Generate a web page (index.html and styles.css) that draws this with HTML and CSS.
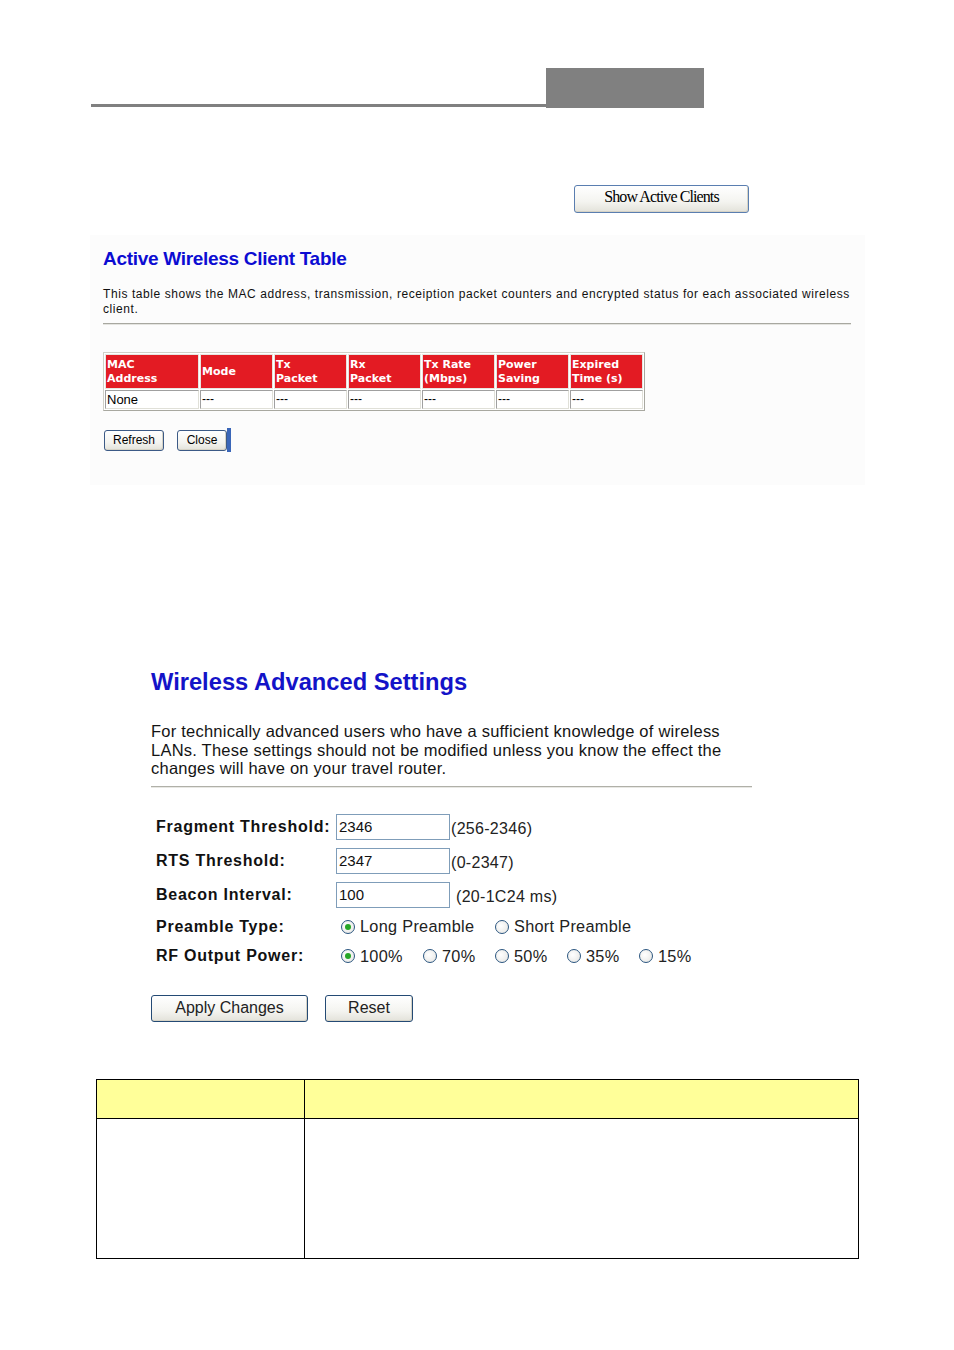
FILE: index.html
```html
<!DOCTYPE html>
<html>
<head>
<meta charset="utf-8">
<title>Wireless Settings</title>
<link rel="stylesheet" href="styles.css">
</head>
<body>
<div class="page">
  <header class="top">
    <div class="top-rule"></div>
    <div class="top-tab"></div>
  </header>

  <div class="show-row">
    <button class="xp-btn show-btn">Show Active Clients</button>
  </div>

  <section class="pane">
    <h2 class="pane-title">Active Wireless Client Table</h2>
    <p class="pane-desc">This table shows the MAC address, transmission, receiption packet counters and encrypted status for each associated wireless<br>client.</p>
    <div class="pane-hr"></div>
    <table class="clients">
      <tr class="clients-head">
        <th class="c-mac">MAC<br>Address</th>
        <th class="c-mode">Mode</th>
        <th>Tx<br>Packet</th>
        <th>Rx<br>Packet</th>
        <th>Tx Rate<br>(Mbps)</th>
        <th>Power<br>Saving</th>
        <th>Expired<br>Time (s)</th>
      </tr>
      <tr class="clients-row">
        <td class="none">None</td>
        <td>---</td>
        <td>---</td>
        <td>---</td>
        <td>---</td>
        <td>---</td>
        <td>---</td>
      </tr>
    </table>
    <div class="pane-btns">
      <button class="xp-btn small-btn refresh-btn">Refresh</button>
      <button class="xp-btn small-btn close-btn">Close</button>
      <span class="focus-bar"></span>
    </div>
  </section>

  <section class="adv">
    <h1 class="adv-title">Wireless Advanced Settings</h1>
    <p class="adv-desc">For technically advanced users who have a sufficient knowledge of wireless<br>LANs. These settings should not be modified unless you know the effect the<br>changes will have on your travel router.</p>
    <div class="adv-hr"></div>

    <div class="form">
      <div class="form-row r1">
        <span class="lbl">Fragment Threshold:</span>
        <span class="field">2346</span>
        <span class="range">(256-2346)</span>
      </div>
      <div class="form-row r2">
        <span class="lbl">RTS Threshold:</span>
        <span class="field">2347</span>
        <span class="range">(0-2347)</span>
      </div>
      <div class="form-row r3">
        <span class="lbl">Beacon Interval:</span>
        <span class="field">100</span>
        <span class="range spaced">(20-1C24 ms)</span>
      </div>
      <div class="form-row r4">
        <span class="lbl">Preamble Type:</span>
        <span class="opts">
          <span class="opt w-long"><span class="radio on"></span>Long Preamble</span>
          <span class="opt"><span class="radio"></span>Short Preamble</span>
        </span>
      </div>
      <div class="form-row r5">
        <span class="lbl">RF Output Power:</span>
        <span class="opts">
          <span class="opt w-p100"><span class="radio on"></span>100%</span>
          <span class="opt w-p"><span class="radio"></span>70%</span>
          <span class="opt w-p"><span class="radio"></span>50%</span>
          <span class="opt w-p"><span class="radio"></span>35%</span>
          <span class="opt"><span class="radio"></span>15%</span>
        </span>
      </div>
    </div>

    <div class="actions">
      <button class="xp-btn big-btn apply-btn">Apply Changes</button>
      <button class="xp-btn big-btn reset-btn">Reset</button>
    </div>
  </section>

  <table class="desc-table">
    <tr class="desc-head"><td class="d-left"></td><td class="d-right"></td></tr>
    <tr class="desc-body"><td class="d-left"></td><td class="d-right"></td></tr>
  </table>
</div>
</body>
</html>
```

FILE: styles.css
```css
html, body {
  margin: 0;
  padding: 0;
  background: #ffffff;
}

.page {
  width: 954px;
  height: 1350px;
  font-family: "Liberation Sans", Arial, sans-serif;
  color: #000;
}

/* top header */
.top {
  display: flex;
  padding-top: 68px;
  height: 40px;
}
.top-rule {
  margin-left: 91px;
  width: 455px;
  height: 3px;
  background: #808080;
  align-self: flex-end;
  margin-bottom: 1px;
}
.top-tab {
  width: 158px;
  height: 40px;
  background: #808080;
}

/* XP style buttons */
.xp-btn {
  box-sizing: border-box;
  border: 1px solid #3c5a86;
  border-radius: 3px;
  background: linear-gradient(#ffffff 0%, #f4f4f0 60%, #e3e2da 100%);
  color: #000;
  padding: 0;
  margin: 0;
  cursor: default;
  box-shadow: inset -1px -1px 0 #d6d3c6;
}

.show-row {
  margin-top: 77px;
  padding-left: 574px;
  height: 27px;
}
.show-btn {
  display: block;
  width: 175px;
  height: 28px;
  padding-bottom: 4px;
  font-family: "Liberation Serif", "Times New Roman", serif;
  font-size: 16px;
  letter-spacing: -0.9px;
  border-color: #5a7eb0;
}

/* screenshot pane */
.pane {
  margin-top: 23px;
  margin-left: 90px;
  width: 775px;
  height: 250px;
  box-sizing: border-box;
  padding: 13px 14px 0 13px;
  background: #fcfcfc;
}
.pane-title {
  margin: 0;
  font-size: 19px;
  line-height: 22px;
  letter-spacing: -0.3px;
  font-weight: bold;
  color: #0c0cd2;
}
.pane-desc {
  margin: 17px 0 0 0;
  font-size: 12px;
  line-height: 15px;
  letter-spacing: 0.58px;
  color: #111;
  white-space: nowrap;
}
.pane-hr {
  margin-top: 6px;
  height: 1px;
  background: #a8a8a0;
  border-bottom: 1px solid #e4e4e0;
}

.clients {
  margin-top: 27px;
  margin-left: 0;
  border-collapse: separate;
  border-spacing: 1px;
  border: 1px solid #d0d0c8;
  border-right-color: #a8a8a0;
  border-bottom-color: #a8a8a0;
  background: #fff;
}
.clients th {
  box-sizing: border-box;
  width: 73px;
  height: 35px;
  padding: 0 1px;
  background: #e31b23;
  color: #fff;
  text-align: left;
  vertical-align: middle;
  font-family: "DejaVu Sans", Verdana, sans-serif;
  font-size: 11px;
  line-height: 14px;
  font-weight: bold;
  border: 1px solid #e6e6e0;
}
.clients th.c-mac {
  width: 94px;
}
.clients td {
  box-sizing: border-box;
  height: 19px;
  padding: 0 1px;
  font-size: 12px;
  line-height: 15px;
  border: 1px solid #e0e0d8;
  border-top-color: #a0a0a0;
  border-left-color: #a0a0a0;
  background: #fff;
  vertical-align: middle;
}
.clients td.none {
  font-size: 13px;
}

.pane-btns {
  display: flex;
  align-items: center;
  margin-top: 17px;
  margin-left: 1px;
}
.small-btn {
  height: 21px;
  font-size: 12px;
  font-family: "Liberation Sans", Arial, sans-serif;
}
.refresh-btn {
  width: 60px;
}
.close-btn {
  width: 50px;
  margin-left: 13px;
}
.focus-bar {
  width: 4px;
  height: 24px;
  background: #3a66b8;
}

/* advanced settings */
.adv {
  margin-top: 183px;
  margin-left: 151px;
  width: 601px;
}
.adv-title {
  margin: 0;
  font-size: 23.7px;
  line-height: 28px;
  font-weight: bold;
  color: #1313c8;
}
.adv-desc {
  margin: 26px 0 0 0;
  font-size: 16.5px;
  line-height: 18.5px;
  letter-spacing: 0.23px;
  color: #141414;
  white-space: nowrap;
}
.adv-hr {
  margin-top: 8px;
  height: 1px;
  background: #b0b0a8;
  border-bottom: 1px solid #e8e8e4;
}

.form {
  margin-top: 22px;
  padding-left: 5px;
}
.form-row {
  display: flex;
  align-items: center;
  height: 34px;
  font-size: 16px;
}
.form-row.r4 {
  height: 30px;
}
.form-row.r5 {
  height: 29px;
}
.lbl {
  width: 180px;
  flex: none;
  font-weight: bold;
  letter-spacing: 0.75px;
  color: #111;
}
.field {
  box-sizing: border-box;
  width: 114px;
  height: 26px;
  border: 1px solid #7f9db9;
  background: #fff;
  font-size: 15px;
  line-height: 24px;
  padding-left: 2px;
  color: #111;
}
.range {
  font-size: 16px;
  letter-spacing: 0.3px;
  margin-top: 4px;
  margin-left: 1px;
  color: #222;
}
.range.spaced {
  margin-left: 6px;
}
.opts {
  display: flex;
  align-items: center;
  margin-left: 5px;
}
.opt {
  display: flex;
  align-items: center;
  color: #222;
  font-size: 16.3px;
  letter-spacing: 0.3px;
}
.w-long {
  width: 154px;
}
.w-p100 {
  width: 82px;
}
.w-p {
  width: 72px;
}
.radio {
  box-sizing: border-box;
  flex: none;
  width: 14px;
  height: 14px;
  border-radius: 50%;
  border: 1px solid #2b5680;
  background: radial-gradient(circle at 40% 40%, #ffffff 0%, #ececea 70%, #d8d8d0 100%);
  margin-right: 5px;
  display: flex;
  align-items: center;
  justify-content: center;
}
.radio.on::after {
  content: "";
  width: 6px;
  height: 6px;
  border-radius: 50%;
  background: #26a626;
}

.actions {
  display: flex;
  margin-top: 24px;
}
.big-btn {
  height: 27px;
  font-size: 16px;
  font-family: "Liberation Sans", Arial, sans-serif;
  color: #222;
  border-color: #244a74;
}
.apply-btn {
  width: 157px;
}
.reset-btn {
  width: 88px;
  margin-left: 17px;
}

/* description table */
.desc-table {
  margin-top: 57px;
  margin-left: 96px;
  width: 763px;
  border-collapse: collapse;
}
.desc-table td {
  border: 1px solid #000;
  padding: 0;
}
.desc-head td {
  height: 38px;
  background: #ffff99;
}
.desc-body td {
  height: 139px;
  background: #fff;
}
.d-left {
  width: 207px;
}
```
